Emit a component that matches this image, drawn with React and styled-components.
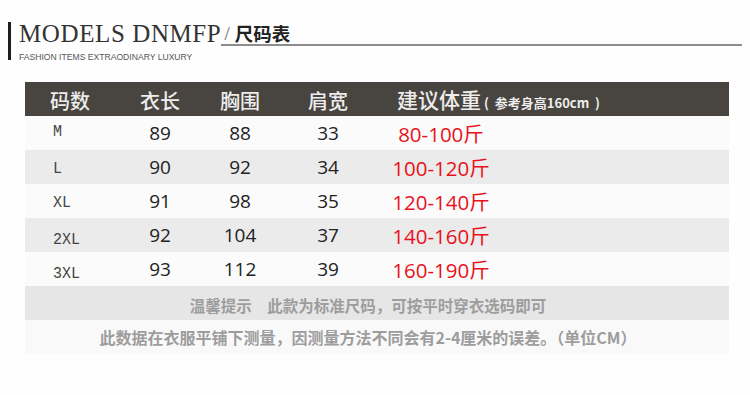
import React from "react";
import styled, { createGlobalStyle } from "styled-components";

const GlobalStyle = createGlobalStyle`
  body {
    margin: 0;
    background: #fefefe;
    font-family: "Noto Sans", "Noto Sans CJK SC", sans-serif;
  }
`;

const rows = [
  { size: "M", length: 89, chest: 88, shoulder: 33, weight: "80-100斤", lift: 11 },
  { size: "L", length: 90, chest: 92, shoulder: 34, weight: "100-120斤", lift: 8 },
  { size: "XL", length: 91, chest: 98, shoulder: 35, weight: "120-140斤", lift: 8 },
  { size: "2XL", length: 92, chest: 104, shoulder: 37, weight: "140-160斤", lift: 5 },
  { size: "3XL", length: 93, chest: 112, shoulder: 39, weight: "160-190斤", lift: 5 },
];

const SizeChart = () => {
  return (
    <Page>
      <GlobalStyle />
      <Masthead>
        <Bar />
        <TitleBlock>
          <Heading>
            <Brand>MODELS DNMFP</Brand>
            <Tail>
              <Slash>/</Slash>
              <ChartName>尺码表</ChartName>
            </Tail>
          </Heading>
          <Tagline>FASHION ITEMS EXTRAODINARY LUXURY</Tagline>
        </TitleBlock>
      </Masthead>

      <Table>
        <HeadRow>
          <HeadCell>码数</HeadCell>
          <HeadCell>衣长</HeadCell>
          <HeadCell>胸围</HeadCell>
          <HeadCell>肩宽</HeadCell>
          <WeightHead>
            建议体重<small>(  参考身高160cm  )</small>
          </WeightHead>
        </HeadRow>

        {rows.map((r, i) => (
          <Row key={r.size} $shaded={i % 2 === 1}>
            <SizeCell $lift={r.lift}>
              <span>{r.size}</span>
            </SizeCell>
            <NumCell>{r.length}</NumCell>
            <NumCell>{r.chest}</NumCell>
            <NumCell>{r.shoulder}</NumCell>
            <WeightCell>{r.weight}</WeightCell>
          </Row>
        ))}

        <NoteRow $shaded $drop={4}>
          温馨提示　此款为标准尺码，可按平时穿衣选码即可
        </NoteRow>
        <NoteRow $size={16}>
          此数据在衣服平铺下测量，因测量方法不同会有2-4厘米的误差。（单位CM）
        </NoteRow>
      </Table>
    </Page>
  );
};

const Page = styled.div`
  width: 750px;
  height: 395px;
  overflow: hidden;
  padding-top: 22px;
  box-sizing: border-box;
`;

const Masthead = styled.header`
  display: flex;
  padding: 0 8px;
`;

const Bar = styled.div`
  width: 3px;
  height: 38px;
  background: #1e1e1e;
  flex-shrink: 0;
`;

const TitleBlock = styled.div`
  flex: 1;
  margin-left: 8px;
`;

const Heading = styled.div`
  display: flex;
  align-items: flex-end;
  height: 24px;
`;

const Brand = styled.span`
  font-family: "Liberation Serif", serif;
  font-size: 25px;
  line-height: 24px;
  letter-spacing: 0.6px;
  color: #333;
  white-space: nowrap;
`;

const Tail = styled.div`
  flex: 1;
  display: flex;
  align-items: flex-end;
  height: 24px;
  box-sizing: border-box;
  border-bottom: 2px solid #8d8d8d;
`;

const Slash = styled.span`
  font-family: "Liberation Serif", serif;
  font-size: 19px;
  line-height: 20px;
  color: #666;
  margin: 0 5px 0 3px;
`;

const ChartName = styled.span`
  font-family: "Noto Sans CJK SC", sans-serif;
  font-weight: 700;
  font-size: 18.5px;
  line-height: 21px;
  color: #222;
`;

const Tagline = styled.div`
  margin-top: 6px;
  font-family: "Liberation Sans", Arial, sans-serif;
  font-size: 8.6px;
  line-height: 10px;
  color: #555;
  white-space: nowrap;
`;

const Table = styled.section`
  margin: 20px 0 0 25px;
  width: 704px;
`;

const columns = "90px 90px 70px 106px 120px 1fr";

const HeadRow = styled.div`
  display: grid;
  grid-template-columns: ${columns};
  height: 34px;
  align-items: center;
  background: #48443f;
  color: #ededed;
  font-family: "Noto Sans CJK SC", sans-serif;
`;

const HeadCell = styled.div`
  text-align: center;
  font-size: 20px;
  font-weight: 500;
  line-height: 34px;
`;

const WeightHead = styled.div`
  grid-column: 5 / -1;
  padding-left: 16px;
  font-size: 21px;
  font-weight: 500;
  line-height: 34px;
  white-space: pre;

  small {
    font-size: 13px;
    font-weight: 700;
    margin-left: 3px;
  }
`;

const Row = styled.div`
  display: grid;
  grid-template-columns: ${columns};
  height: 34px;
  align-items: center;
  background: ${({ $shaded }) => ($shaded ? "#ebebeb" : "#fbfbfb")};
`;

const SizeCell = styled.div`
  align-self: end;
  padding: 0 0 ${({ $lift }) => $lift}px 28px;
  font-family: "Liberation Mono", monospace;
  font-size: 15px;
  line-height: 12px;
  color: #444;

  span {
    display: inline-block;
    transform: scaleY(1.15);
    transform-origin: bottom left;
  }
`;

const NumCell = styled.div`
  text-align: center;
  font-family: "Open Sans", "Noto Sans", sans-serif;
  font-size: 19px;
  color: #222;
`;

const WeightCell = styled.div`
  text-align: center;
  white-space: nowrap;
  font-family: "Open Sans", "Noto Sans CJK SC", sans-serif;
  font-size: 20.5px;
  color: #e8121b;
`;

const NoteRow = styled.div`
  height: 34px;
  box-sizing: border-box;
  padding: ${({ $drop }) => $drop || 0}px 18px 0 0;
  display: flex;
  align-items: center;
  justify-content: center;
  background: ${({ $shaded }) => ($shaded ? "#e6e6e6" : "#f9f9f9")};
  font-family: "Noto Sans CJK SC", sans-serif;
  font-weight: 700;
  font-size: ${({ $size }) => $size || 15.5}px;
  color: #9d9d9d;
  white-space: nowrap;
`;

export default SizeChart;
